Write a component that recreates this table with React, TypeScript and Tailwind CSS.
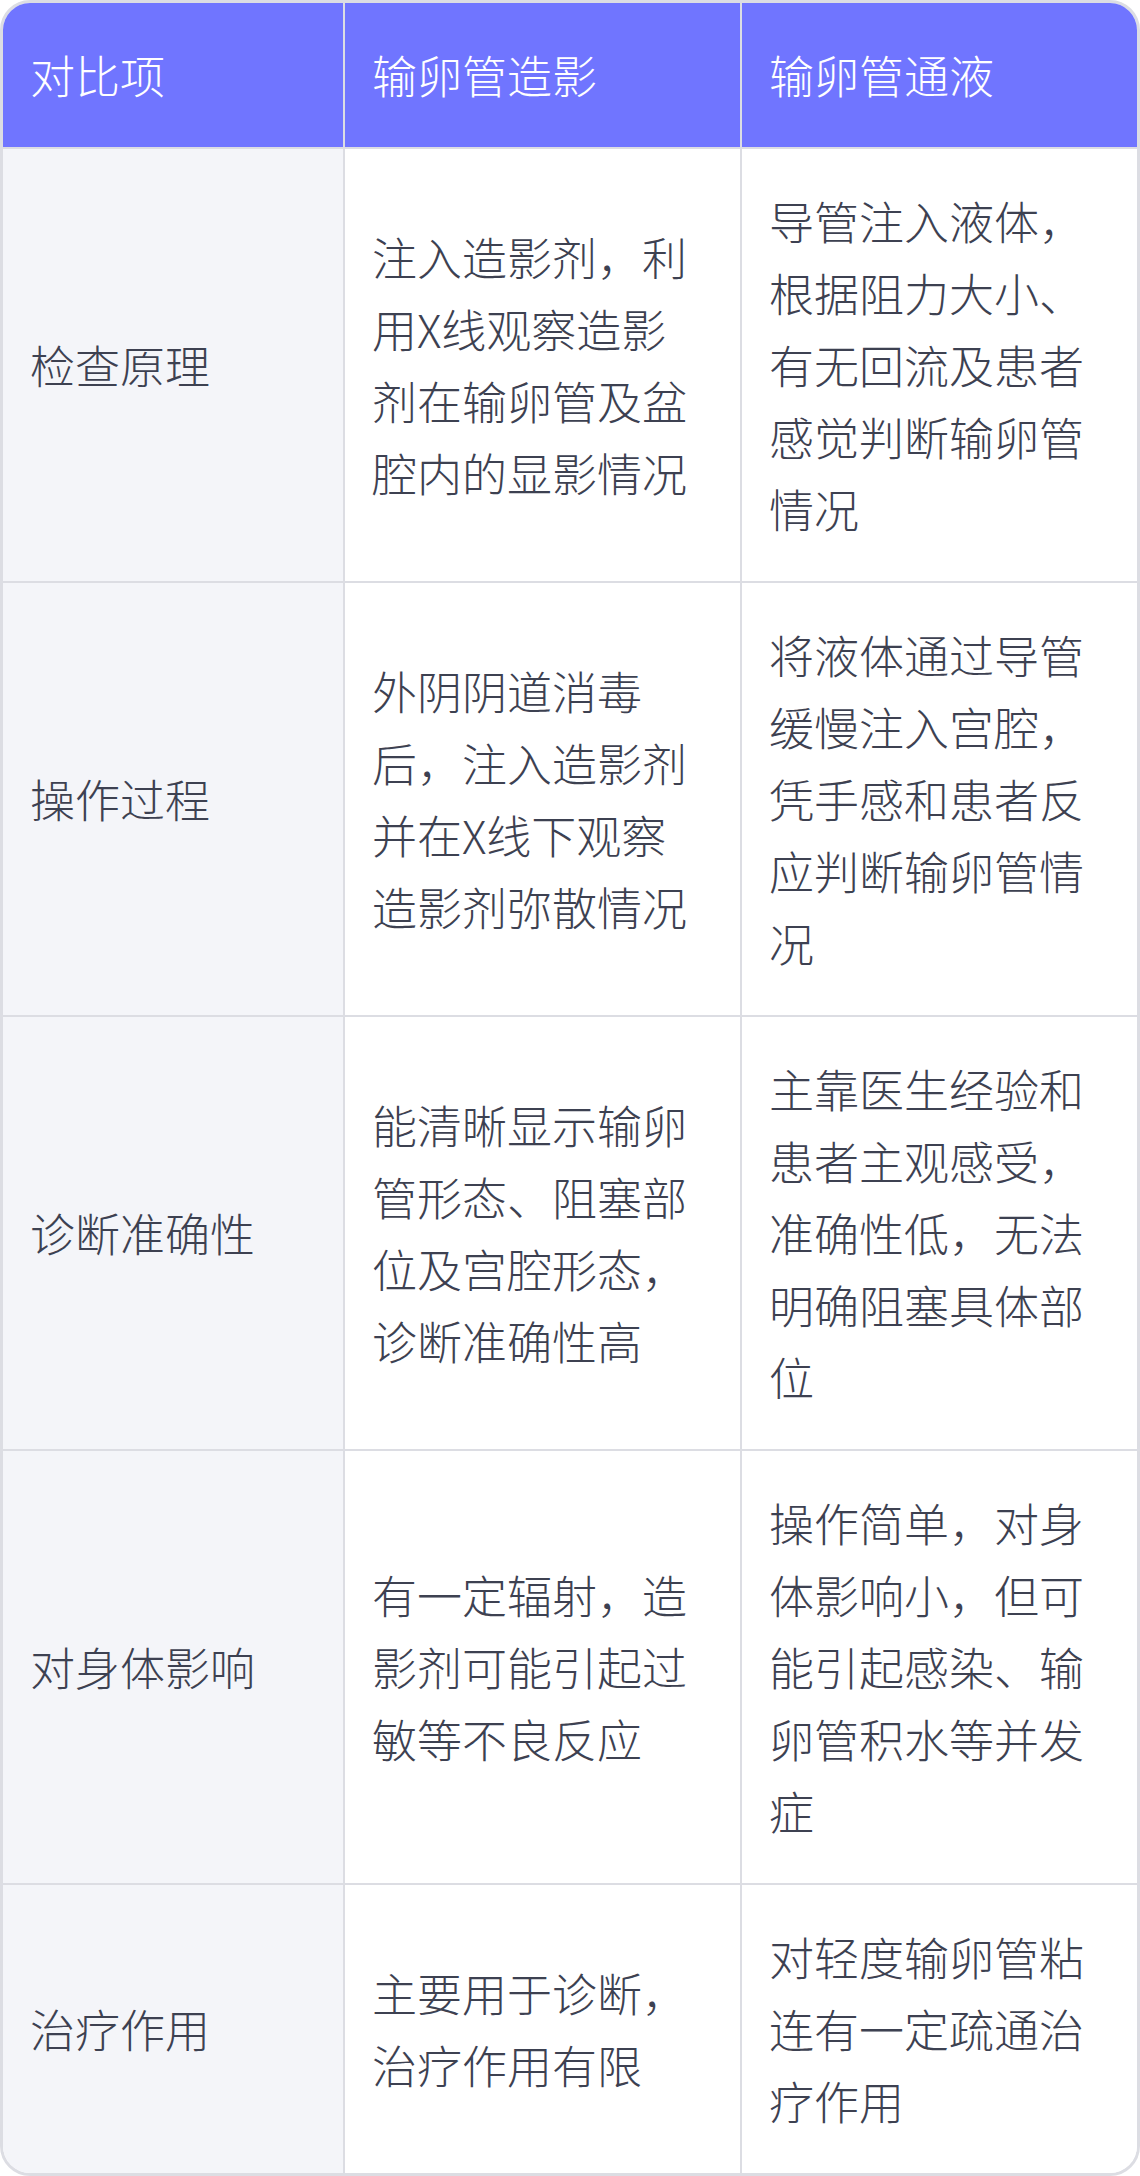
const header = ['对比项', '输卵管造影', '输卵管通液'];

const rows = [
  {
    item: '检查原理',
    hsg: '注入造影剂，利用X线观察造影剂在输卵管及盆腔内的显影情况',
    flush: '导管注入液体，根据阻力大小、有无回流及患者感觉判断输卵管情况',
  },
  {
    item: '操作过程',
    hsg: '外阴阴道消毒后，注入造影剂并在X线下观察造影剂弥散情况',
    flush: '将液体通过导管缓慢注入宫腔，凭手感和患者反应判断输卵管情况',
  },
  {
    item: '诊断准确性',
    hsg: '能清晰显示输卵管形态、阻塞部位及宫腔形态，诊断准确性高',
    flush: '主靠医生经验和患者主观感受，准确性低，无法明确阻塞具体部位',
  },
  {
    item: '对身体影响',
    hsg: '有一定辐射，造影剂可能引起过敏等不良反应',
    flush: '操作简单，对身体影响小，但可能引起感染、输卵管积水等并发症',
  },
  {
    item: '治疗作用',
    hsg: '主要用于诊断，治疗作用有限',
    flush: '对轻度输卵管粘连有一定疏通治疗作用',
  },
];

export default function App() {
  return (
    <div
      className="w-[1140px] bg-white"
      style={{ fontFamily: '"Noto Sans CJK SC", "Noto Sans", sans-serif' }}
    >
      <div className="border-[3px] border-[#dcdde3] rounded-[30px] overflow-hidden">
        <div className="grid grid-cols-[342px_397px_395px] text-[45px] leading-[72px] font-light">
          {/* header */}
          {header.map((h, i) => (
            <div
              key={h}
              className={
                'flex items-center bg-[#7075ff] text-white pl-[27px] pr-[33px] py-[36px] border-b-2 border-[#dcdde3] ' +
                (i < 2 ? 'border-r-2' : '')
              }
            >
              {h}
            </div>
          ))}

          {/* body */}
          {rows.map((r, ri) => {
            const last = ri === rows.length - 1;
            const base = 'flex items-center pl-[27px] pr-[33px] py-[36px] text-[#3d4151] border-[#dcdde3] ';
            const bottom = last ? '' : 'border-b-2 ';
            return [
              <div key={r.item + 'a'} className={base + bottom + 'border-r-2 bg-[#f4f5f9]'}>
                {r.item}
              </div>,
              <div key={r.item + 'b'} className={base + bottom + 'border-r-2 bg-white'}>
                {r.hsg}
              </div>,
              <div key={r.item + 'c'} className={base + bottom + 'bg-white'}>
                {r.flush}
              </div>,
            ];
          })}
        </div>
      </div>
    </div>
  );
}
